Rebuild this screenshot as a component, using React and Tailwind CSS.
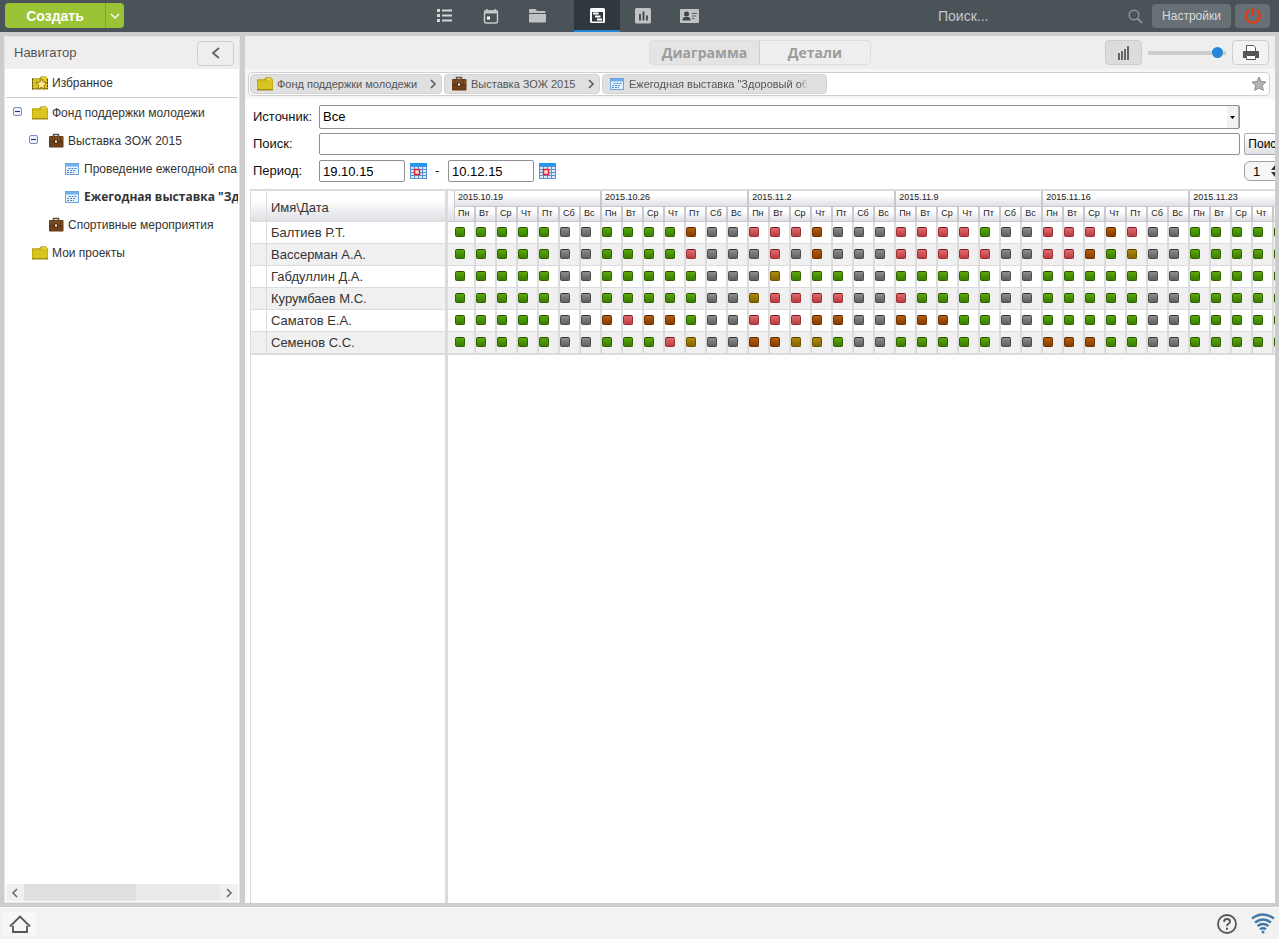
import { useState } from "react";
import clsx from "clsx";

const DAYS = ["Пн", "Вт", "Ср", "Чт", "Пт", "Сб", "Вс"];
const WEEKS = ["2015.10.19", "2015.10.26", "2015.11.2", "2015.11.9", "2015.11.16", "2015.11.23"];

// g - free, x - day off, y / o - partly loaded, r - overloaded
const PEOPLE = [
  { name: "Балтиев Р.Т.", load: "gggggxx ggggoxx rrroxxx rrrrgxx rrrorxx ggggg" },
  { name: "Вассерман А.А.", load: "gggggxx ggggrxx xrxoxxx rrrrrxx rrogyxx ggggg" },
  { name: "Габдуллин Д.А.", load: "gggggxx gggggxx xygggxx gggggxx gggggxx ggggg" },
  { name: "Курумбаев М.С.", load: "gggggxx gggggxx yrrrrxx rggggxx gggggxx ggggg" },
  { name: "Саматов Е.А.", load: "gggggxx oroogxx rrrooxx oooggxx gggggxx ggggg" },
  { name: "Семенов С.С.", load: "gggggxx gggryxx ooyygxx gggggxx oooggxx ggggg" },
];

const DOTS = {
  g: "from-[#5aa90a] to-[#3b7c02] border-[#2f6400] border-t-[#254d02]",
  x: "from-[#8e8e8e] to-[#606060] border-[#4c4c4c] border-t-[#333333]",
  y: "from-[#b08c08] to-[#826400] border-[#6c5400] border-t-[#4f3d02]",
  o: "from-[#b85e0e] to-[#863c00] border-[#703200] border-t-[#522602]",
  r: "from-[#e26a6e] to-[#b83c40] border-[#a03034] border-t-[#6a1c1f]",
};

const HEAD = "bg-linear-to-b from-white from-30% to-[#dfe0e4]";

function FolderIcon({ star }) {
  return (
    <svg width="16" height="16" viewBox="0 0 16 16" className="shrink-0">
      <path d="M0 3.5h7l2-2h5l1 2h1V14H0z" fill="#8b7a10" />
      <path d="M.5 3.5H8l2-2h4l1.5 2V13H.5z" fill="#cdb714" />
      <path d="M.5 5.5H9l1.5-2h5V13H.5z" fill="#d9c41f" />
      <path d="M9.500 2.500h4.500v1H9.500z" fill="#f0e679" />
      <path d="M0 13h16v1.500H0z" fill="#a08c14" />
      {star && (
        <>
          <path d="M.5 3.500v11M15.500 4v10" stroke="#4b4420" strokeDasharray="2 1" />
          <path
            d="M9.500 3.500l1.700 3.600 3.900.5-2.900 2.700.8 3.900-3.500-1.900L6 14.200l.8-3.900-2.900-2.700 3.900-.5z"
            fill="#ffe98a"
            stroke="#9a6a10"
            strokeWidth=".9"
          />
        </>
      )}
    </svg>
  );
}

function BriefcaseIcon() {
  return (
    <svg width="16" height="16" viewBox="0 0 16 16" className="shrink-0">
      <path d="M5.500 3.500v-2h5v2" fill="none" stroke="#5f5348" strokeWidth="1.500" />
      <rect x="1" y="3" width="14.500" height="11.500" rx="1" fill="#5e3717" />
      <rect x="1.500" y="3.500" width="13.500" height="4.500" fill="#7d4c22" />
      <rect x="1.500" y="9.500" width="13.500" height="4" fill="#704018" />
      <path d="M4 3v5M12.500 3v5" stroke="#5e3717" />
      <rect x="6" y="6.500" width="4" height="4" fill="#4a2a12" />
      <rect x="7" y="7.500" width="2" height="2" fill="#fff" />
    </svg>
  );
}

function TaskIcon() {
  return (
    <svg width="14" height="12" viewBox="0 0 14 12" className="shrink-0">
      <rect x=".5" y=".5" width="13" height="11" fill="#e8f3fc" stroke="#6fa4dc" />
      <rect x="1" y="1" width="12" height="2.500" fill="#6fb0ee" />
      <path d="M3.500 5.500h8M2 7.500h9M2 9.500h7" stroke="#4a87c8" strokeDasharray="2 1" />
    </svg>
  );
}

function GridCalendarIcon() {
  return (
    <svg width="17" height="16" viewBox="0 0 17 16">
      <rect width="17" height="16" fill="#5b8fd8" />
      <rect width="17" height="3" fill="#1e9bf0" />
      <path
        d="M1 4h3v2H1zM5 4h3v2H5zM9 4h3v2H9zM13 4h3v2h-3zM1 7h3v2H1zM9 7h3v2H9zM13 7h3v2h-3zM1 10h3v2H1zM9 10h3v2H9zM13 10h3v2h-3zM1 13h3v2H1zM5 13h3v2H5zM9 13h3v2H9zM13 13h3v2h-3z"
        fill="#dcebfb"
      />
      <rect x="4.500" y="6.500" width="5" height="5" fill="#f4dfe6" stroke="#e8232b" strokeWidth="1.500" />
    </svg>
  );
}

function Chevron({ d = "M2 1l4 4-4 4", className }) {
  return (
    <svg width="8" height="10" viewBox="0 0 8 10" className={className}>
      <path d={d} fill="none" stroke="currentColor" strokeWidth="1.500" />
    </svg>
  );
}

const NAV = [
  {
    label: "Список",
    icon: (
      <g fill="#d4d6d7">
        <path d="M0 1h3v3H0zM0 6h3v3H0zM0 11h3v3H0zM5 1.500h10v2H5zM5 6.500h10v2H5zM5 11.500h10v2H5z" />
      </g>
    ),
  },
  {
    label: "Календарь",
    icon: (
      <g fill="none" stroke="#c6c9ca">
        <rect x="1.500" y="3" width="13" height="12" rx="1.500" strokeWidth="1.500" />
        <path d="M1 4h14" strokeWidth="3" />
        <path d="M4 1v3M12 1v3" strokeWidth="1.500" />
        <path d="M4 8.500h3v3H4z" fill="#fff" stroke="none" />
      </g>
    ),
  },
  {
    label: "Проекты",
    icon: (
      <g fill="#c0c2c3">
        <path d="M0 2Q0 1 1 1h5.500l1.500 2h7.500q1 0 1 1V5H0zM0 6h17v7.500q0 1-1 1H1q-1 0-1-1z" />
      </g>
    ),
  },
  {
    label: "Диаграмма Ганта",
    active: true,
    icon: (
      <g>
        <rect x="1" y="1" width="15" height="15" rx="1.500" fill="#fff" />
        <path d="M3 5h11v9.500H3z" fill="#2f373c" />
        <path d="M4 6.500h5.500M6 9.500h5.500M8 12.500h5" stroke="#fff" strokeWidth="1.800" />
      </g>
    ),
  },
  {
    label: "Отчеты",
    icon: (
      <g>
        <rect x="0" y="0" width="16" height="15.500" rx="1.500" fill="#c0c2c3" />
        <path d="M5 6v6.500M8.500 3.500v9M12 7.500v5" stroke="#3d4449" strokeWidth="1.800" />
      </g>
    ),
  },
  {
    label: "Контакты",
    icon: (
      <g>
        <rect x="-1" y="1" width="19" height="14" rx="1" fill="#c0c2c3" />
        <circle cx="5.500" cy="6" r="2.500" fill="#3d4449" />
        <path d="M1.500 12.500q0-3.500 2.500-3.500h3q2.500 0 2.500 3.500z" fill="#3d4449" />
        <path d="M11 5.500h5M11 8h4M11 10.500h2.500" stroke="#5b6267" />
      </g>
    ),
  },
];

function Header() {
  return (
    <header className="flex h-8 shrink-0 bg-[#4a5358]">
      <div className="basis-[33%] pl-[5px] pt-[3px]">
        <div className="flex h-[25px] w-[119px] overflow-hidden rounded bg-[#9ac436] text-white">
          <button className="flex-1 text-sm font-bold leading-6">Создать</button>
          <button aria-label="Еще" className="flex w-[19px] items-center justify-center border-l border-[#7ea522]">
            <svg width="10" height="6" viewBox="0 0 10 6">
              <path d="M1 1l4 4 4-4" fill="none" stroke="#fff" strokeWidth="1.300" />
            </svg>
          </button>
        </div>
      </div>
      <nav className="flex">
        {NAV.map((item) => (
          <button
            key={item.label}
            aria-label={item.label}
            className={clsx(
              "flex w-[46px] items-center justify-center",
              item.active && "ml-[14px] border-b-2 border-[#2486d8] bg-[#30383e]"
            )}
          >
            <svg width="17" height="17" viewBox="0 0 17 17" className="overflow-visible">
              {item.icon}
            </svg>
          </button>
        ))}
      </nav>
      <div className="ml-auto flex items-center pr-[9px]">
        <input
          type="text"
          aria-label="Поиск"
          placeholder="Поиск..."
          className="w-[190px] bg-transparent text-sm text-[#c4c8ca] outline-none placeholder:text-[#c4c8ca]"
        />
        <svg width="15" height="15" viewBox="0 0 15 15" className="mr-[9px]">
          <circle cx="6" cy="6" r="4.800" fill="none" stroke="#8b9194" strokeWidth="1.500" />
          <path d="M9.500 9.500L14 14" stroke="#8b9194" strokeWidth="2" />
        </svg>
        <button className="h-6 w-[79px] rounded bg-[#667075] text-xs text-[#d8dbdc]">Настройки</button>
        <button aria-label="Выход" className="ml-1 flex h-6 w-[35px] items-center justify-center rounded bg-[#667075]">
          <svg width="18" height="18" viewBox="0 0 18 18">
            <path d="M5 3a7 7 0 1 0 8 0M9 .5v8.500" fill="none" stroke="#e8380d" strokeWidth="2.200" />
          </svg>
        </button>
      </div>
    </header>
  );
}

const TREE = [
  { text: "Фонд поддержки молодежи", level: 0, icon: <FolderIcon />, open: true },
  { text: "Выставка ЗОЖ 2015", level: 1, icon: <BriefcaseIcon />, open: true },
  { text: "Проведение ежегодной спа", level: 2, icon: <TaskIcon /> },
  { text: 'Ежегодная выставка "Зд', level: 2, icon: <TaskIcon />, selected: true },
  { text: "Спортивные мероприятия", level: 1, icon: <BriefcaseIcon /> },
  { text: "Мои проекты", level: 0, icon: <FolderIcon /> },
];

const INDENT = ["pl-[7px]", "pl-[23px]", "pl-[39px]"];

function Sidebar() {
  return (
    <aside className="flex w-[236px] shrink-0 flex-col border border-[#e4e4e4] bg-white">
      <div className="flex h-8 items-center justify-between bg-[#eeeeee] pl-[9px] pr-[5px]">
        <h2 className="text-[13px] text-[#555]">Навигатор</h2>
        <button
          aria-label="Свернуть"
          className="flex h-[25px] w-[37px] items-center justify-center rounded border border-[#cfcfcf] text-[#666]"
        >
          <svg width="9" height="12" viewBox="0 0 9 12">
            <path d="M8 1L2 6l6 5" fill="none" stroke="currentColor" strokeWidth="2" />
          </svg>
        </button>
      </div>
      <div className="mx-px flex h-[29px] shrink-0 items-center gap-1 border-b border-[#cccccc] pl-[26px] text-xs text-[#333]">
        <FolderIcon star />
        Избранное
      </div>
      <ul className="mx-px min-h-0 flex-1 overflow-hidden pt-px text-xs text-[#333]">
        {TREE.map((node) => (
          <li key={node.text} className={clsx("flex h-7 items-center whitespace-nowrap", INDENT[node.level])}>
            <span className="mr-[10px] flex w-[9px] shrink-0">
              {node.open && (
                <button aria-label="Свернуть узел">
                  <svg width="9" height="9" viewBox="0 0 9 9" className="mb-1">
                    <rect x=".5" y=".5" width="8" height="8" rx="1.500" fill="#eef1fa" stroke="#7d8cc4" />
                    <path d="M2 4.500h5" stroke="#1c2a8c" />
                  </svg>
                </button>
              )}
            </span>
            <span className="mr-1 flex w-4 shrink-0 justify-center">{node.icon}</span>
            <span className={clsx(node.selected && "font-['Open_Sans',sans-serif] font-bold")}>{node.text}</span>
          </li>
        ))}
      </ul>
      <div className="mx-px mb-px flex h-[17px] shrink-0 bg-[#eaeaea] text-[#666]">
        <button aria-label="Влево" className="flex w-[18px] items-center justify-center bg-[#f0f0f0]">
          <Chevron d="M6 1L2 5l4 4" />
        </button>
        <div className="flex-1">
          <div className="h-full w-[57%] bg-[#dfdfdf]" />
        </div>
        <button aria-label="Вправо" className="flex w-[18px] items-center justify-center bg-[#f0f0f0]">
          <Chevron />
        </button>
      </div>
    </aside>
  );
}

function Toolbar() {
  const [tab, setTab] = useState("Диаграмма");

  return (
    <div className="grid h-[33px] shrink-0 grid-cols-[1fr_auto_1fr] items-center bg-[#eeeeee]">
      <div className="col-start-2 flex h-[25px] overflow-hidden rounded border border-[#dedede] font-['Open_Sans',sans-serif] text-sm font-bold text-[#9c9c9c]">
        {["Диаграмма", "Детали"].map((name) => (
          <button
            key={name}
            onClick={() => setTab(name)}
            className={clsx("w-[110px]", name === tab && "border-r border-[#cccccc] bg-[#e4e4e4]")}
          >
            {name}
          </button>
        ))}
      </div>
      <div className="flex items-center justify-end pr-[6px]">
        <button
          aria-label="Загрузка"
          className="flex h-[25px] w-[37px] items-center justify-center rounded border border-[#cccccc] bg-[#dcdcdc]"
        >
          <svg width="12" height="14" viewBox="0 0 12 14">
            <path d="M1 7v7M4 5v9M7 3v11M10 0v14" stroke="#666" strokeWidth="2" />
          </svg>
        </button>
        <input
          type="range"
          aria-label="Масштаб"
          defaultValue="95"
          className="mx-[6px] h-[4px] w-[78px] appearance-none bg-[#cdcdcd] [&::-webkit-slider-thumb]:size-[11px] [&::-webkit-slider-thumb]:appearance-none [&::-webkit-slider-thumb]:rounded-full [&::-webkit-slider-thumb]:bg-[#2486d8]"
        />
        <button
          aria-label="Печать"
          className="flex h-[25px] w-[37px] items-center justify-center rounded border border-[#cfcfcf] bg-[#f2f2f2]"
        >
          <svg width="16" height="15" viewBox="0 0 16 15">
            <path d="M3.500 6V.5h7l2 2V6" fill="#fff" stroke="#555" />
            <path d="M0 7q0-1 1-1h14q1 0 1 1v6h-3v-3H3v3H0z" fill="#555" />
            <path d="M3.500 10.500h9v4h-9z" fill="#fff" stroke="#555" />
          </svg>
        </button>
      </div>
    </div>
  );
}

function Crumb({ icon, text, width, last }) {
  return (
    <a
      href="#"
      className={clsx("flex h-5 items-center rounded border border-[#d2d2d2] bg-[#e0e0e0] pl-[6px] text-[11px] text-[#555]", width)}
    >
      <span className="mr-1 flex w-4 shrink-0 justify-center">{icon}</span>
      <span className={clsx("whitespace-nowrap", last && "mask-r-from-95%")}>{text}</span>
      {!last && <Chevron className="ml-auto mr-1" />}
    </a>
  );
}

function Breadcrumbs() {
  return (
    <div className="h-[30px] shrink-0 bg-[#f6f6f6] pl-[3px] pr-[5px] pt-[3px]">
      <div className="flex h-6 items-center gap-[2px] rounded border border-[#cfcfcf] bg-white px-px">
        <Crumb icon={<FolderIcon />} text="Фонд поддержки молодежи" width="w-[192px]" />
        <Crumb icon={<BriefcaseIcon />} text="Выставка ЗОЖ 2015" width="w-[156px]" />
        <Crumb icon={<TaskIcon />} text={'Ежегодная выставка "Здоровый об'} width="w-[225px]" last />
        <button aria-label="В избранное" className="ml-auto mr-px">
          <svg width="16" height="16" viewBox="0 0 16 16">
            <path
              d="M8 1l2 4.500 5 .5-3.700 3.400 1 5L8 12l-4.300 2.400 1-5L1 6l5-.5z"
              fill="#b4b4b4"
              stroke="#8c8c8c"
            />
          </svg>
        </button>
      </div>
    </div>
  );
}

function DateField({ id, label, value }) {
  return (
    <>
      <input
        id={id}
        type="text"
        aria-label={label}
        defaultValue={value}
        className="h-[22px] w-[86px] rounded-xs border border-[#8f8f94] px-[3px] text-black"
      />
      <button type="button" aria-label="Выбрать дату" className="ml-[5px]">
        <GridCalendarIcon />
      </button>
    </>
  );
}

function Filters() {
  return (
    <form className="flex flex-col overflow-hidden pl-2 pt-[6px] text-[13px] text-[#111]">
      <div className="flex h-6 items-center">
        <label htmlFor="source" className="w-[66px] shrink-0">
          Источник:
        </label>
        <div className="relative mr-[35px] flex-1">
          <select
            id="source"
            className="block h-6 w-full appearance-none rounded-xs border border-[#8f8f94] bg-white px-[3px] text-black"
          >
            <option>Все</option>
          </select>
          <span className="pointer-events-none absolute inset-y-px right-px flex w-3 items-center justify-center border-r border-[#b0b0b0] bg-[#f2f2f2]">
            <svg width="5" height="3" viewBox="0 0 5 3">
              <path d="M0 0h5L2.500 3z" fill="#000" />
            </svg>
          </span>
        </div>
      </div>
      <div className="mt-1 flex h-[22px] items-center">
        <label htmlFor="query" className="w-[66px] shrink-0">
          Поиск:
        </label>
        <input id="query" type="text" className="h-[22px] min-w-0 flex-1 rounded-xs border border-[#8f8f94] px-[3px]" />
        <div className="ml-1 w-[31px] overflow-hidden">
          <button
            type="button"
            className="h-[22px] w-[42px] rounded-xs border border-[#a9a9b4] bg-linear-to-b from-white to-[#dfe1e6] text-xs text-black"
          >
            Поиск
          </button>
        </div>
      </div>
      <div className="mt-[5px] flex h-[22px] items-center">
        <label htmlFor="from" className="w-[66px] shrink-0">
          Период:
        </label>
        <DateField id="from" label="Период с" value="19.10.15" />
        <span className="mx-2 w-[5px]">-</span>
        <DateField id="to" label="Период по" value="10.12.15" />
        <div className="relative ml-auto w-[31px] overflow-hidden">
          <select
            aria-label="Шаг"
            className="block h-5 w-[42px] appearance-none rounded-md border border-[#a0a0a0] bg-[#f6f6f6] px-2 text-black"
          >
            <option>1</option>
          </select>
          <svg width="8" height="12" viewBox="0 0 8 12" className="pointer-events-none absolute left-[27px] top-1">
            <path d="M0 5l4-5 4 5zM0 7l4 5 4-5z" fill="#333" />
          </svg>
        </div>
      </div>
    </form>
  );
}

function LoadGrid() {
  return (
    <div className="mt-[7px] flex min-h-0 flex-1 pl-[5px]">
      <div className="w-[198px] shrink-0 border-l border-r-3 border-t-2 border-[#dcdcdc]">
        <table className="w-full table-fixed border-separate border-spacing-0 text-left text-[13px] text-[#333]">
          <thead>
            <tr className="h-[31px]">
              <th className={clsx("w-4 border-b border-r border-[#dcdcdc] p-0", HEAD)} />
              <th className={clsx("border-b border-[#dcdcdc] p-0 pl-1 pt-[3px] font-normal", HEAD)}>Имя\Дата</th>
            </tr>
          </thead>
          <tbody>
            {PEOPLE.map((p) => (
              <tr key={p.name} className="h-[22px] even:bg-[#f0f0f0]">
                <td className="border-b border-r border-[#dcdcdc] p-0" />
                <td className="border-b border-[#dcdcdc] p-0 pl-1 leading-[21px]">{p.name}</td>
              </tr>
            ))}
          </tbody>
        </table>
        <div className="h-px bg-[#dcdcdc]" />
      </div>
      <div className="min-w-0 flex-1 overflow-hidden border-t-2 border-[#dcdcdc]">
        <table className="w-[847px] table-fixed border-separate border-spacing-0 text-left text-[#222]">
          <colgroup>
            <col className="w-[7px]" />
            {PEOPLE[0].load.replaceAll(" ", "").split("").map((_, i) => (
              <col key={i} className="w-[21px]" />
            ))}
          </colgroup>
          <thead className="text-[9px]">
            <tr className="h-4">
              <th rowSpan={2} className={clsx("border-b border-r border-[#c8c8cf] p-0", HEAD)} />
              {WEEKS.map((week, i) => (
                <th
                  key={week}
                  colSpan={i === WEEKS.length - 1 ? 5 : 7}
                  className={clsx("border-b border-r-2 border-[#c8c8cf] p-0 pl-[3px] align-top font-normal leading-3", HEAD)}
                >
                  {week}
                </th>
              ))}
            </tr>
            <tr className="h-[15px]">
              {PEOPLE[0].load.replaceAll(" ", "").split("").map((_, i) => (
                <th
                  key={i}
                  className={clsx("border-b border-r-2 border-[#c8c8cf] p-0 pl-[3px] align-top font-normal leading-3", HEAD)}
                >
                  {DAYS[i % 7]}
                </th>
              ))}
            </tr>
          </thead>
          <tbody>
            {PEOPLE.map((p) => (
              <tr key={p.name} className="h-[22px] even:bg-[#f0f0f0]">
                <td className="border-b border-[#dcdcdc] p-0" />
                {p.load.replaceAll(" ", "").split("").map((code, i) => (
                  <td key={i} className="border-b border-r-2 border-[#dcdcdc] p-0 pt-[5px] align-top">
                    <div className={clsx("size-[10px] rounded-xs border bg-linear-to-b", DOTS[code])} />
                  </td>
                ))}
              </tr>
            ))}
          </tbody>
        </table>
        <div className="h-px bg-[#dcdcdc]" />
      </div>
    </div>
  );
}

function Footer() {
  return (
    <footer className="flex h-8 shrink-0 items-center border-t border-white bg-[#f2f2f2] pl-[3px] pr-1">
      <button aria-label="Домой" className="flex h-6 w-[33px] items-center justify-center bg-[#f7f7f7]">
        <svg width="22" height="18" viewBox="0 0 22 18">
          <path d="M1 11.500L11 1.500l10 10M4 11v6h14v-6" fill="none" stroke="#555" strokeWidth="1.800" />
        </svg>
      </button>
      <button aria-label="Помощь" className="ml-auto">
        <svg width="20" height="20" viewBox="0 0 20 20" fill="none" stroke="#555">
          <circle cx="10" cy="10" r="9" strokeWidth="1.800" />
          <path d="M7 8q0-3 3-3t3 2.500q0 1.500-1.500 2.300T10 12.200" strokeWidth="1.800" />
          <path d="M10 13.700v2" strokeWidth="2" />
        </svg>
      </button>
      <svg width="24" height="21" viewBox="0 0 24 21" className="ml-[14px]" fill="none" stroke="#4279a8" strokeWidth="2.400">
        <path d="M1 5.500q11-8 22 0M4 9.500q8-6 16 0M6.500 13q5.500-4 11 0M9 16.300q3-2 6 0" />
        <circle cx="12" cy="19" r="1.500" fill="#4279a8" stroke="none" />
      </svg>
    </footer>
  );
}

export default function App() {
  return (
    <div className="flex h-screen flex-col overflow-hidden bg-[#cdcdcd] font-['Liberation_Sans',sans-serif]">
      <Header />
      <div className="flex min-h-0 flex-1 gap-[5px] px-1 pb-1 pt-1">
        <Sidebar />
        <main className="flex min-w-0 flex-1 flex-col overflow-hidden bg-white">
          <Toolbar />
          <Breadcrumbs />
          <Filters />
          <LoadGrid />
        </main>
      </div>
      <Footer />
    </div>
  );
}
